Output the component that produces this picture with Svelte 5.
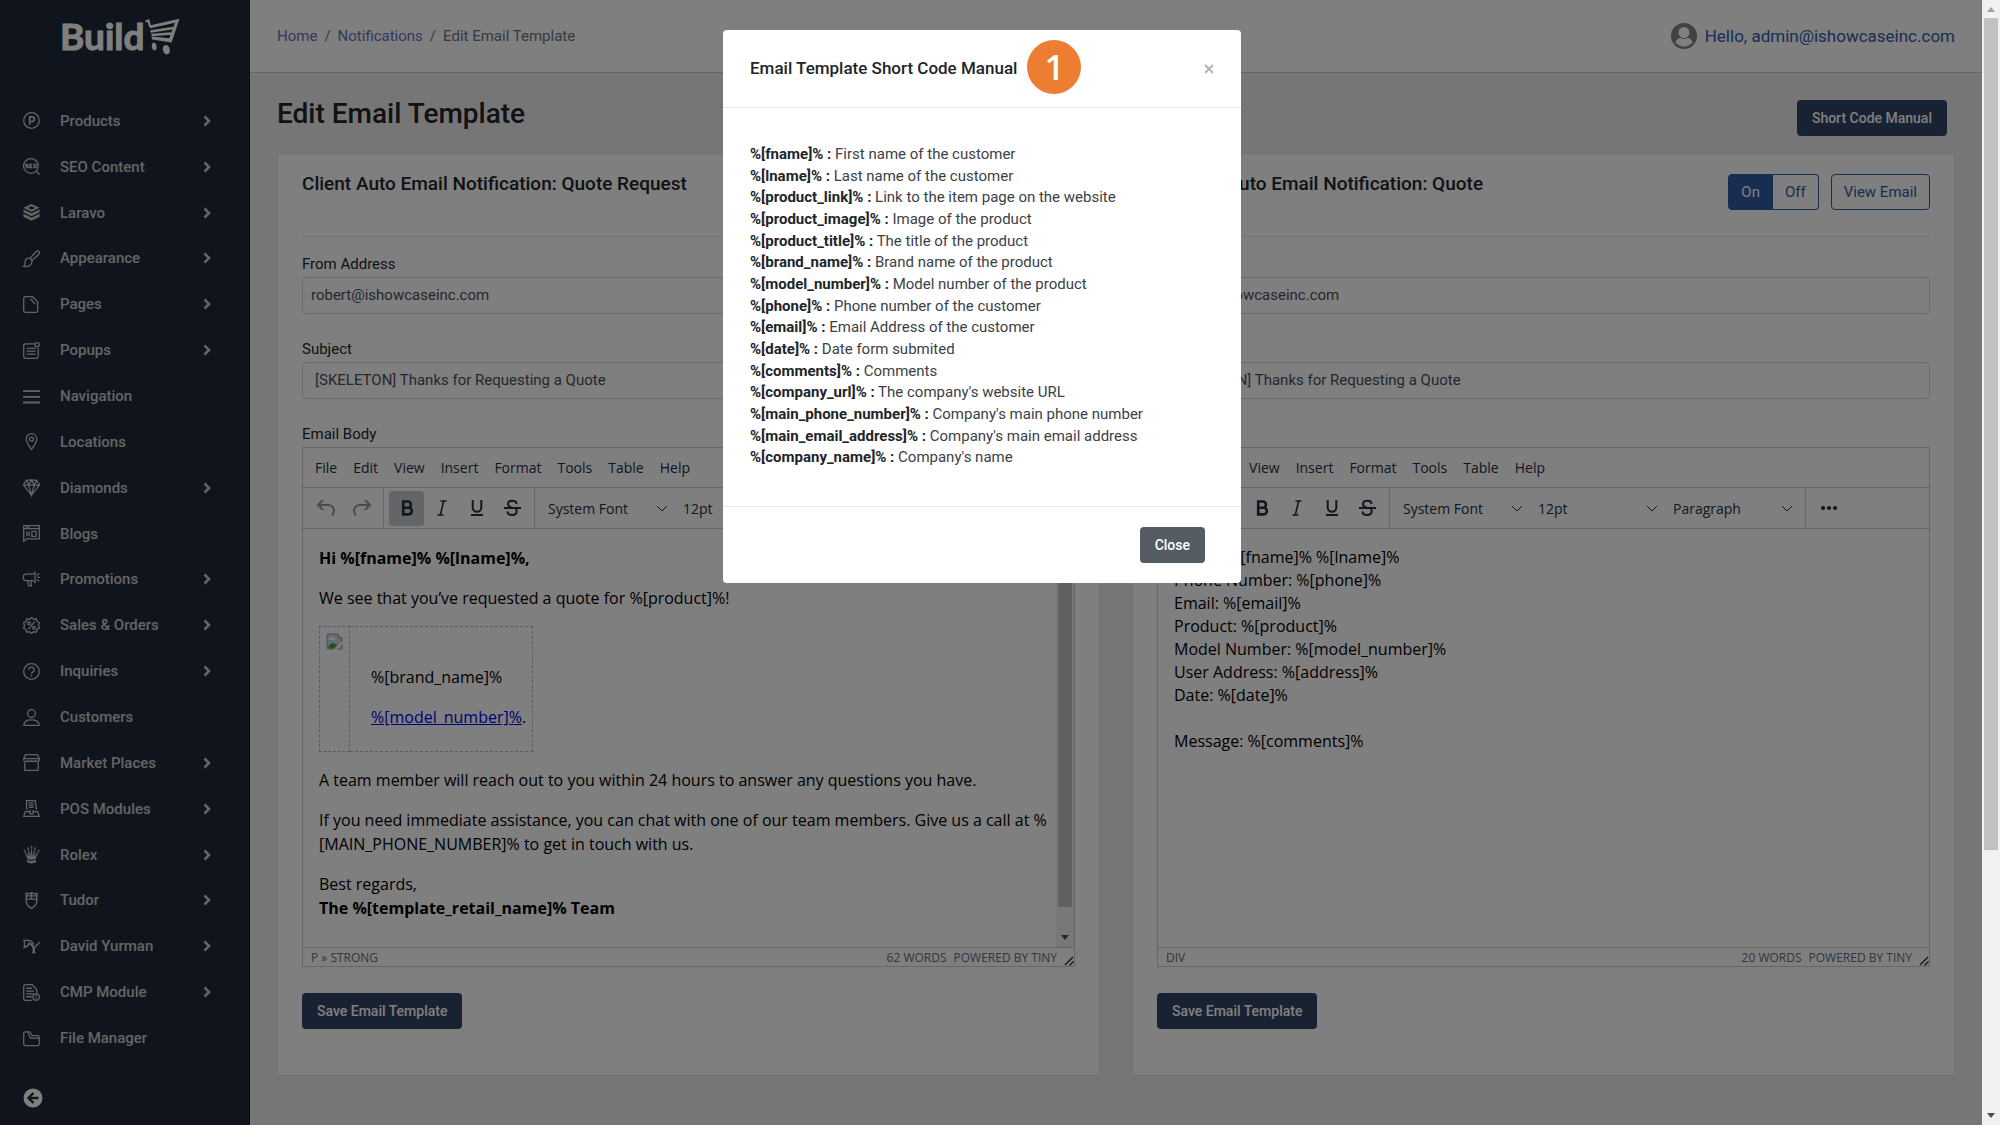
<script>
  /** Edit Email Template: two notification editors with the short code manual open. */

  const menu = [
    { label: 'Products', sub: true, icon: '<circle cx="12" cy="12" r="11"/><path d="M9.5 18V6.8h3.2a3.2 3.2 0 0 1 0 6.6H9.5" stroke-width="2.4"/>' },
    { label: 'SEO Content', sub: true, icon: '<circle cx="11.2" cy="11.2" r="10.4"/><path d="M18.6 18.6 23.4 23.4M7.4 9H4.2v2.3h3v2.4H4M13 9H9.6v4.7H13M9.6 11.3h2.8M15.4 9h3v4.7h-3z"/>' },
    { label: 'Laravo', sub: true, icon: '<path fill="currentColor" stroke="none" d="M12 0 23.4 5.4 12 11 .6 5.4zM12 3.2 7 5.5l5 2.4 5-2.4z" fill-rule="evenodd"/><path fill="currentColor" stroke="none" d="m.6 7.6 11.4 5.6 11.4-5.6v4.2L12 17.4.6 11.8zM.6 13.8 12 19.4l11.4-5.6V18L12 23.8.6 18z"/>' },
    { label: 'Appearance', sub: true, icon: '<path d="M10 11.5 18.6 2.2a2.6 2.6 0 0 1 3.8 3.7L13 14.6M7.6 11.6c3.2-.4 5.6 2.4 5 5.4-.8 4.4-5.4 6.8-11.8 6.2 2.4-1.4 2-3.4 2.2-6 .2-2.8 2-5.3 4.6-5.6zM9.8 11.6l3 3"/>' },
    { label: 'Pages', sub: true, icon: '<path d="M3.5 1h10l7.3 7.6v12.2a2.4 2.4 0 0 1-2.4 2.4H3.5A2.5 2.5 0 0 1 1 20.7V3.5A2.5 2.5 0 0 1 3.5 1zM10.5 4l6.5 7.5"/>' },
    { label: 'Popups', sub: true, icon: '<path d="M17 2.5H3.5A2.5 2.5 0 0 0 1 5v15.5A2.5 2.5 0 0 0 3.5 23H19a2.5 2.5 0 0 0 2.5-2.5V8M5 9h13M5 13h13M5 17h13"/><circle cx="20" cy="3.8" r="3"/>' },
    { label: 'Navigation', icon: '<path d="M0 4.5h24M0 12.5h24M0 20.5h24" stroke-width="2.6"/>' },
    { label: 'Locations', icon: '<path d="M12 1c4.5 0 7.5 3.4 7.5 7.5C19.5 13 15 19 12 23.2 9 19 4.5 13 4.5 8.5 4.5 4.4 7.5 1 12 1z"/><circle cx="12" cy="8.6" r="2.8"/>' },
    { label: 'Diamonds', sub: true, icon: '<path d="M5 1.5h14l4.3 7L12 23 .7 8.5zM.7 8.5h22.6M8 8.5 12 23l4-14.5M5 1.5l3 7 4-7 4 7 3-7"/>' },
    { label: 'Blogs', icon: '<path d="M1 1h22v18.5H5L1 23zM1 5h22M5.5 9v7M8.5 9v7"/><path d="M12.5 9h6v7h-6zM4 3h5"/>' },
    { label: 'Promotions', sub: true, icon: '<path d="M4 4.5h9.5L17 2v14l-3.5-2.5H4A3.5 3.5 0 0 1 .5 10V8A3.5 3.5 0 0 1 4 4.5zM6.5 13.5 8 21h4l-1-7.5M19.5 6 23 3.5M20 9h4M19.5 12l3.5 2.5"/>' },
    { label: 'Sales & Orders', sub: true, icon: '<path d="m12 .8 3 2.4 3.8-.6 1 3.7 3.4 1.8L21.800 12l1.400 3.600-3.400 2-1 3.800-3.800-.6-3 2.400-3-2.400-3.800.6-1-3.800-3.400-2L2.200 12 .8 8.100l3.400-1.800 1-3.700L9 3.200zM16.500 6.500l-9 11"/><circle cx="8.500" cy="8.800" r="2"/><circle cx="15.500" cy="15.200" r="2"/>' },
    { label: 'Inquiries', sub: true, icon: '<circle cx="12" cy="12" r="11"/><path d="M8.3 9.5a3.7 3.7 0 1 1 5.6 3.2c-1.3.8-1.9 1.3-1.9 2.8M12 17v2.2" stroke-width="2"/>' },
    { label: 'Customers', icon: '<circle cx="12" cy="6.5" r="5.5"/><path d="M1.2 23c.2-4.6 3.8-7.5 10.8-7.5S22.6 18.4 22.8 23z"/>' },
    { label: 'Market Places', sub: true, icon: '<path d="M3.5 1h17L23 6.5v2a2.8 2.8 0 0 1-5.5 0 2.8 2.8 0 0 1-5.5 0 2.8 2.8 0 0 1-5.5 0 2.8 2.8 0 0 1-5.5 0v-2zM1 6.5h22M2.5 12v11h19V12"/>' },
    { label: 'POS Modules', sub: true, icon: '<path d="M6.5 13.5 5 12V1h12.5L19 13.5M8 4.5h7M8 7.5h7M8 10.5h7M3.5 16.5h5l1.5 3h4l1.5-3h5L23 23H1zM10 14v3M14 14v3"/>' },
    { label: 'Rolex', sub: true, icon: '<path fill="currentColor" d="M6.5 18 2 7l6.2 9L7 4l3.6 12L12 2l1.4 14L17 4l-1.2 12L22 7l-4.5 11c-3 1.5-8 1.5-11 0z" stroke-width=".6"/><path d="M6.5 20.5c3 1.8 8 1.8 11 0v1.8c-3 1.5-8 1.5-11 0z"/><path d="M2 6.5h.1M7 3h.1M12 1.2h.1M17 3h.1M22 6.5h.1" stroke-linecap="round" stroke-width="2.4"/>' },
    { label: 'Tudor', sub: true, icon: '<path d="M4.5 2c2 1.5 4 .5 7.5-1 3.5 1.5 5.5 2.5 7.5 1v11c0 5-4 8-7.5 10-3.5-2-7.5-5-7.5-10zM4.5 10h15M12 1v9M4.5 5.5h15" stroke-width="2"/>' },
    { label: 'David Yurman', sub: true, icon: '<path d="M0 3.5h7c5 0 7 2.5 8 6M2 4v9M0 13.5c4 0 6-1.5 9-5M16 20v-6.5L23.5 6M13 20.5h4.5"/><path d="M7.5 7.5c3.5 0 6 3 7.5 6.500v6" stroke-width="2.8"/>' },
    { label: 'CMP Module', sub: true, icon: '<path d="M13 23H3.5A2.5 2.5 0 0 1 1 20.5v-17A2.5 2.5 0 0 1 3.5 1H13l6.5 7v5M4.5 6h8M4.5 10h11M4.5 14h11M4.5 18h8"/><circle cx="18.5" cy="18.5" r="4.5"/><path d="M18.5 14v9" stroke-width="1.2"/>' },
    { label: 'File Manager', icon: '<path d="M3.5 2.5h6L13 8h7.5a2.5 2.5 0 0 1 2.5 2.5v9a2.5 2.5 0 0 1-2.5 2.5h-17A2.5 2.5 0 0 1 1 19.5V5a2.5 2.5 0 0 1 2.5-2.5zM7 3l3.5 8.5H23"/>' },
  ]

  const codes = [
    ['fname', 'First name of the customer'],
    ['lname', 'Last name of the customer'],
    ['product_link', 'Link to the item page on the website'],
    ['product_image', 'Image of the product'],
    ['product_title', 'The title of the product'],
    ['brand_name', 'Brand name of the product'],
    ['model_number', 'Model number of the product'],
    ['phone', 'Phone number of the customer'],
    ['email', 'Email Address of the customer'],
    ['date', 'Date form submited'],
    ['comments', 'Comments'],
    ['company_url', "The company's website URL"],
    ['main_phone_number', "Company's main phone number"],
    ['main_email_address', "Company's main email address"],
    ['company_name', "Company's name"],
  ]

  const editorMenus = ['File', 'Edit', 'View', 'Insert', 'Format', 'Tools', 'Table', 'Help']
  const dropdowns = [
    ['Font', 'System Font'],
    ['Font size', '12pt'],
    ['Block', 'Paragraph'],
  ]

  let manualOpen = $state(true)
  let clientFrom = $state('robert@ishowcaseinc.com')
  let internalTo = $state('sales@ishowcaseinc.com')
  let clientSubject = $state('[SKELETON] Thanks for Requesting a Quote')
  let internalSubject = $state('[SKELETON] Thanks for Requesting a Quote')
</script>

{#snippet clientBody()}
  <p><strong>Hi %[fname]% %[lname]%,</strong></p>
  <p>We see that you’ve requested a quote for %[product]%!</p>
  <table class="product">
    <tbody>
      <tr>
        <td class="product__image">
          <svg width="17" height="17" viewBox="0 0 17 17" role="img" aria-label="Product">
            <path d="M1 1h11l4 4v11H1z" fill="#c6d9f5" stroke="#a0a0a0" />
            <path d="M3 6c0-2 3-3 4-1 2-1 3 1 2 2H3z" fill="#fff" />
            <path d="M2 15.500c1-5 5-7 9-3.500l-3 3.500z" fill="#4aa532" />
            <path d="M12 1v4h4" fill="#eee" stroke="#a0a0a0" />
            <path d="M17 9 9 17" stroke="#fff" stroke-width="2" />
          </svg>
        </td>
        <td class="product__text">
          <p>%[brand_name]%</p>
          <p><a href="#model">%[model_number]%</a>.</p>
        </td>
      </tr>
    </tbody>
  </table>
  <p>A team member will reach out to you within 24 hours to answer any questions you have.</p>
  <p>If you need immediate assistance, you can chat with one of our team members. Give us a call at %<wbr />[MAIN_PHONE_NUMBER]% to get in touch with us.</p>
  <p>Best regards,<br /><strong>The %[template_retail_name]% Team</strong></p>
{/snippet}

{#snippet internalBody()}
  <div>Name: %[fname]% %[lname]%</div>
  <div>Phone Number: %[phone]%</div>
  <div>Email: %[email]%</div>
  <div>Product: %[product]%</div>
  <div>Model Number: %[model_number]%</div>
  <div>User Address: %[address]%</div>
  <div>Date: %[date]%</div>
  <div><br /></div>
  <div>Message: %[comments]%</div>
{/snippet}

{#snippet editor(id, body, path, words, boldOn, scroll)}
  <div class="editor">
    <div class="editor__menubar">
      {#each editorMenus as item}
        <button type="button">{item}</button>
      {/each}
    </div>
    <div class="editor__toolbar">
      <div class="group group--muted">
        <button type="button" aria-label="Undo">
          <svg width="24" height="24" viewBox="0 0 24 24"><path d="m9 4-5 5 5 5M4.5 9H14c4 0 6 3 6 5.5 0 2-.8 3.5-2 5" /></svg>
        </button>
        <button type="button" aria-label="Redo">
          <svg width="24" height="24" viewBox="0 0 24 24"><path d="m16 4 5 5-5 5M20.5 9H11c-4 0-6 3-6 5.5 0 2 .8 3.5 2 5" /></svg>
        </button>
      </div>
      <div class="group">
        <button type="button" class:on={boldOn} aria-label="Bold">
          <svg width="24" height="24" viewBox="0 0 24 24"><path d="M8.2 5.5h4.6a3.1 3.1 0 0 1 0 6.3H8.2zM8.2 11.8h5.4a3.3 3.3 0 0 1 0 6.6H8.2z" stroke-width="2.6" /></svg>
        </button>
        <button type="button" aria-label="Italic">
          <svg width="24" height="24" viewBox="0 0 24 24"><path d="M10.5 5h6M7.5 19h6M13.7 5l-3.4 14" stroke-width="1.6" /></svg>
        </button>
        <button type="button" aria-label="Underline">
          <svg width="24" height="24" viewBox="0 0 24 24"><path d="M7.7 4v7.5a4.3 4.3 0 0 0 8.6 0V4M6 19h12" stroke-width="2" /></svg>
        </button>
        <button type="button" aria-label="Strikethrough">
          <svg width="24" height="24" viewBox="0 0 24 24"><path d="M16.5 8c0-2-1.8-3.2-4.3-3.2S8 6 8 8.2c0 1.8 1.5 2.8 4 3.4M7.5 15.5c0 2.2 1.9 3.5 4.7 3.5s4.5-1.4 4.5-3.7c0-.9-.3-1.8-1-2.5M4 12h17" stroke-width="2" /></svg>
        </button>
      </div>
      <div class="group">
        {#each dropdowns as [name, value]}
          <label class="pick">
            <select aria-label={name}><option>{value}</option></select>
            <svg width="10" height="10" viewBox="0 0 10 10"><path d="m0 3 5 5 5-5" /></svg>
          </label>
        {/each}
      </div>
      <div class="group">
        <button type="button" aria-label="More">
          <svg width="24" height="24" viewBox="0 0 24 24"><path class="dots" d="M6 12h.1M12 12h.1M18 12h.1" /></svg>
        </button>
      </div>
    </div>
    <div class="editor__main">
      <div class="editor__body" role="textbox" tabindex="0" aria-multiline="true" aria-labelledby={id}>
        {@render body()}
      </div>
      {#if scroll}
        <div class="bar bar--inner">
          <svg width="8" height="5" viewBox="0 0 8 5"><path d="M0 5 4 0l4 5z" /></svg>
          <span class="bar__thumb"></span>
          <svg width="8" height="5" viewBox="0 0 8 5"><path d="m0 0 4 5 4-5z" /></svg>
        </div>
      {/if}
    </div>
    <div class="editor__status">
      <span>{path}</span>
      <span class="editor__words">{words} WORDS</span>
      <a href="#tiny">POWERED BY TINY</a>
      <svg width="10" height="10" viewBox="0 0 10 10"><path d="M1 9 9 1M5.5 9.5l4-4" /></svg>
    </div>
  </div>
{/snippet}

<div class="shell">
  <aside class="sidebar">
    <a class="logo" href="#home" aria-label="Build home">
      <span>Build</span>
      <svg width="35" height="37" viewBox="0 0 35 37">
        <path d="M.5 3.5 3.5 2.5 5 8.5" fill="none" stroke="currentColor" stroke-width="2.2" />
        <path d="M4.5 7.5 34.5.8l-8 23.7L7 21.5l-.5-3 17.8 1.8L30 4.800 5 10.200z" fill="currentColor" />
        <path d="M5.5 13.5 28.5 10M6.5 17l20-1.5" fill="none" stroke="currentColor" stroke-width="2.4" />
        <ellipse cx="9.2" cy="28.5" rx="2.3" ry="3.8" fill="currentColor" transform="rotate(-10 9.2 28.5)" />
        <ellipse cx="21.3" cy="31.7" rx="3.3" ry="4.6" fill="currentColor" transform="rotate(-15 21.3 31.7)" />
      </svg>
    </a>
    <nav>
      {#each menu as item}
        <a href="#{item.label}">
          <svg class="nav-icon" width="17" height="17" viewBox="0 0 24 24">{@html item.icon}</svg>
          <span>{item.label}</span>
          {#if item.sub}
            <svg class="caret" width="8" height="12" viewBox="0 0 8 12"><path d="M1.5 1.5 6 6l-4.5 4.5" /></svg>
          {/if}
        </a>
      {/each}
    </nav>
    <button class="collapse" type="button" aria-label="Collapse menu">
      <svg width="20" height="20" viewBox="0 0 20 20">
        <circle cx="10" cy="10" r="9.5" fill="currentColor" />
        <path d="m10.5 5-5 5 5 5M6 10h9.5" fill="none" stroke="#212b3a" stroke-width="2.4" />
      </svg>
    </button>
  </aside>

  <div class="page">
    <header class="topbar">
      <nav class="crumbs" aria-label="Breadcrumb">
        <a href="#home">Home</a><i>/</i><a href="#notifications">Notifications</a><i>/</i><span>Edit Email Template</span>
      </nav>
      <a class="user" href="#account">
        <svg width="26" height="26" viewBox="0 0 26 26">
          <circle cx="13" cy="13" r="12" fill="#828282" stroke="#828282" stroke-width="2" />
          <circle cx="13" cy="9.5" r="5.5" fill="#fff" />
          <path d="M4.5 19.5c1-4 4-4.500 5.500-4.500 2 1.300 4 1.300 6 0 1.500 0 4.500.5 5.500 4.500-4.500 5.500-12.500 5.500-17 0z" fill="#fff" />
        </svg>
        Hello, admin@ishowcaseinc.com
      </a>
    </header>

    <main>
      <div class="heading">
        <h1>Edit Email Template</h1>
        <button class="btn btn--navy" type="button" onclick={() => (manualOpen = true)}>Short Code Manual</button>
      </div>

      <div class="cards">
        <section class="card">
          <div class="card__head">
            <h2>Client Auto Email Notification: Quote Request</h2>
          </div>
          <label for="from-client">From Address</label>
          <input id="from-client" type="text" bind:value={clientFrom} />
          <label for="subject-client">Subject</label>
          <input id="subject-client" class="subject" type="text" bind:value={clientSubject} />
          <span class="label" id="body-client">Email Body</span>
          {@render editor('body-client', clientBody, 'P » STRONG', 62, true, true)}
          <button class="btn btn--navy" type="button">Save Email Template</button>
        </section>

        <section class="card">
          <div class="card__head">
            <h2>Internal Auto Email Notification: Quote</h2>
            <div class="toggle">
              <button class="btn btn--blue" type="button">On</button>
              <button class="btn btn--line" type="button">Off</button>
            </div>
            <button class="btn btn--line" type="button">View Email</button>
          </div>
          <label for="to-internal">To Address</label>
          <input id="to-internal" type="text" bind:value={internalTo} />
          <label for="subject-internal">Subject</label>
          <input id="subject-internal" class="subject" type="text" bind:value={internalSubject} />
          <span class="label" id="body-internal">Email Body</span>
          {@render editor('body-internal', internalBody, 'DIV', 20, false, false)}
          <button class="btn btn--navy" type="button">Save Email Template</button>
        </section>
      </div>
    </main>
  </div>

  <div class="bar">
    <svg width="8" height="5" viewBox="0 0 8 5"><path d="M0 5 4 0l4 5z" fill="#a3a3a3" /></svg>
    <span class="bar__thumb"></span>
    <svg width="8" height="5" viewBox="0 0 8 5"><path d="m0 0 4 5 4-5z" /></svg>
  </div>
</div>

{#if manualOpen}
  <div class="backdrop">
    <div class="modal" role="dialog" aria-modal="true" aria-labelledby="manual-title">
      <div class="modal__head">
        <h3 id="manual-title">Email Template Short Code Manual</h3>
        <span class="step">1</span>
        <button class="modal__x" type="button" aria-label="Dismiss" onclick={() => (manualOpen = false)}>
          <svg width="10" height="10" viewBox="0 0 10 10"><path d="m1 1 8 8M9 1 1 9" /></svg>
        </button>
      </div>
      <ul class="modal__body">
        {#each codes as [code, text]}
          <li><b>%[{code}]% :</b> {text}</li>
        {/each}
      </ul>
      <div class="modal__foot">
        <button class="btn btn--gray" type="button" onclick={() => (manualOpen = false)}>Close</button>
      </div>
    </div>
  </div>
{/if}

<style>
  :global(body) {
    overflow: hidden;
    font-family: Roboto, "Liberation Sans", sans-serif;
    font-size: 14px;
    color: #212529;
  }

  .shell,
  .shell *,
  .backdrop,
  .backdrop * {
    box-sizing: border-box;
  }

  a {
    color: inherit;
    text-decoration: none;
  }

  button,
  input,
  select {
    font: inherit;
    color: inherit;
  }

  button {
    border: 0;
    padding: 0;
    background: none;
  }

  svg {
    display: block;
    flex: none;
  }

  .shell {
    display: grid;
    grid-template-columns: 250px minmax(0, 1fr) 18px;
    height: 100vh;
  }

  /* Sidebar */
  .sidebar {
    display: flex;
    flex-direction: column;
    background: #212b3a;
    color: #c9c9c9;
    border-right: 1px solid #161d29;
  }

  .logo {
    display: flex;
    align-items: flex-start;
    height: 98px;
    padding: 12px 0 0 60px;
    color: #fff;
  }

  .logo span {
    font: 700 37px/48px Lato, sans-serif;
    -webkit-text-stroke: 1px currentColor;
  }

  .logo svg {
    margin-top: 6px;
  }

  .sidebar nav {
    flex: 1;
    display: grid;
    grid-auto-rows: 1fr;
  }

  .sidebar nav a {
    display: flex;
    align-items: center;
    gap: 20px;
    padding: 0 38px 0 23px;
    font-size: 15px;
    font-weight: 500;
  }

  .nav-icon {
    overflow: visible;
    fill: none;
    stroke: currentColor;
    stroke-width: 1.8;
  }

  .caret {
    margin-left: auto;
    fill: none;
    stroke: currentColor;
    stroke-width: 2.6;
  }

  .collapse {
    height: 64px;
    padding: 10px 0 0 23px;
    color: #fff;
  }

  /* Page */
  .page {
    display: flex;
    flex-direction: column;
    min-width: 0;
    background: #ececec;
  }

  .topbar {
    display: flex;
    align-items: center;
    justify-content: space-between;
    height: 73px;
    padding: 0 27px;
    background: #fff;
    border-bottom: 1px solid #c4c6ca;
  }

  .crumbs {
    display: flex;
    gap: 7px;
    font-size: 15px;
    color: #6c757d;
  }

  .crumbs a {
    color: #6a70bd;
  }

  .crumbs i {
    font-style: normal;
  }

  .user {
    display: flex;
    align-items: center;
    gap: 8px;
    font-size: 17px;
    color: #305aa4;
  }

  main {
    padding: 0 27px;
  }

  .heading {
    display: flex;
    align-items: center;
    justify-content: space-between;
    height: 80px;
    padding: 10px 8px 0 0;
  }

  h1,
  h2,
  h3 {
    margin: 0;
    font-weight: 500;
  }

  h1 {
    padding-bottom: 10px;
    font-size: 28px;
  }

  .btn {
    height: 36px;
    padding: 0 12px;
    border: 1px solid transparent;
    border-radius: 4px;
    font-size: 15px;
    font-weight: 400;
  }

  .btn--navy {
    background: #324567;
    color: #fff;
  }

  .btn--blue {
    background: #305aa4;
    border-color: #305aa4;
    color: #fff;
  }

  .btn--line {
    border-color: #305aa4;
    color: #305aa4;
  }

  .btn--gray {
    background: #545b62;
    color: #fff;
  }

  .btn--navy,
  .btn--gray {
    padding: 0 14px;
    font-size: 14px;
    font-weight: 500;
  }

  .cards {
    display: grid;
    grid-template-columns: 1fr 1fr;
    gap: 32px;
  }

  .card {
    padding: 0 24px 46px;
    min-width: 0;
    background: #fff;
    border: 1px solid #e4e4e4;
    border-radius: 4px;
  }

  .card__head {
    display: flex;
    align-items: flex-start;
    height: 83px;
    margin-bottom: 17px;
    padding-top: 20px;
    border-bottom: 1px solid #e2e4e6;
  }

  h2 {
    flex: 1;
    font-size: 19px;
    line-height: 20px;
  }

  .toggle {
    display: flex;
    margin-right: 12px;
  }

  .toggle .btn:first-child {
    border-radius: 4px 0 0 4px;
  }

  .toggle .btn:last-child {
    border-radius: 0 4px 4px 0;
    border-left: 0;
  }

  label:not(.pick),
  .label {
    display: block;
    height: 23px;
    font-size: 15px;
    line-height: 20px;
  }

  input {
    display: block;
    width: 100%;
    height: 37px;
    margin-bottom: 25px;
    padding: 0 8px 2px;
    border: 1px solid #d5d7e2;
    border-radius: 4px;
    background: none;
    font-size: 15px;
    color: #495057;
  }

  .subject {
    padding: 0 12px 2px;
  }

  /* Editor */
  .editor {
    margin-bottom: 26px;
    border: 1px solid #ccc;
    font-family: "Open Sans", "Noto Sans", sans-serif;
    color: #222f3e;
  }

  .editor__menubar {
    display: flex;
    height: 40px;
    padding: 0 4px;
    border-bottom: 1px solid #ccc;
  }

  .editor__menubar button {
    padding: 0 8px;
    font-size: 14px;
  }

  .editor__toolbar {
    display: flex;
    height: 41px;
    border-bottom: 1px solid #ccc;
  }

  .group {
    display: flex;
    align-items: center;
    padding: 0 5px;
    border-right: 1px solid #ccc;
  }

  .group:last-child {
    border-right: 0;
  }

  .group button {
    display: grid;
    place-items: center;
    width: 35px;
    height: 35px;
    border-radius: 3px;
  }

  .group button.on {
    background: #c8cbcf;
  }

  .group svg {
    fill: none;
    stroke: #222f3e;
    stroke-width: 2;
  }

  .group--muted svg {
    opacity: 0.5;
  }

  .group .dots {
    stroke-width: 4;
    stroke-linecap: round;
  }

  .pick {
    display: flex;
    align-items: center;
    width: 135px;
    padding: 0 8px;
  }

  .pick select {
    flex: 1;
    min-width: 0;
    padding: 0;
    border: 0;
    appearance: none;
    background: none;
    font-size: 14px;
  }

  .pick svg {
    stroke-width: 1;
  }

  .editor__main {
    display: flex;
    height: 418px;
  }

  .editor__body {
    flex: 1;
    padding: 17px 8px 0 16px;
    font-size: 16px;
    line-height: 23px;
    color: #000;
  }

  .editor__body p {
    margin: 0 0 16px;
    line-height: 24px;
  }

  .editor__body a {
    color: #00e;
    text-decoration: underline;
  }

  .product {
    margin-bottom: 16px;
    border-collapse: collapse;
  }

  .product td {
    padding: 6px;
    border: 1px dashed #bbb;
    vertical-align: top;
  }

  .product .product__text {
    padding: 38px 6px 6px 21px;
  }

  .editor__status {
    display: flex;
    align-items: center;
    height: 19px;
    padding: 0 0 0 8px;
    border-top: 1px solid #ccc;
    font-size: 12px;
    color: #646d78;
  }

  .editor__words {
    margin: 0 7px 0 auto;
  }

  .editor__status svg {
    align-self: flex-end;
    margin-left: 7px;
    fill: none;
    stroke: #222f3e;
    stroke-width: 1.4;
  }

  /* Scrollbars */
  .bar {
    display: flex;
    flex-direction: column;
    align-items: center;
    justify-content: space-between;
    gap: 6px;
    padding: 7px 0;
    background: #f1f1f1;
  }

  .bar .bar__thumb {
    width: 14px;
    height: 832px;
    margin-bottom: auto;
    background: #c1c1c1;
  }

  .bar--inner {
    width: 18px;
  }

  .bar--inner .bar__thumb {
    height: 360px;
  }

  .bar svg {
    fill: #505050;
  }

  /* Short code manual */
  .backdrop {
    position: fixed;
    inset: 0 18px 0 0;
    display: flex;
    align-items: flex-start;
    justify-content: center;
    padding: 30px 18px 0 0;
    background: rgba(0, 0, 0, 0.5);
  }

  .modal {
    width: 518px;
    background: #fff;
    border-radius: 4px;
  }

  .modal__head {
    display: flex;
    align-items: center;
    height: 78px;
    padding: 0 27px;
    border-bottom: 1px solid #e4e6e8;
  }

  h3 {
    padding-bottom: 2px;
    font-size: 17px;
  }

  .step {
    display: grid;
    place-items: center;
    width: 54px;
    height: 54px;
    margin: 0 auto 4px 10px;
    border-radius: 50%;
    background: #ed7d31;
    color: #fff;
    font: 600 35px/54px "Open Sans", sans-serif;
  }

  .modal__x svg {
    fill: none;
    stroke: #b4b4b4;
    stroke-width: 2;
  }

  .modal__body {
    display: grid;
    min-height: 398px;
    margin: 0;
    padding: 36px 27px 37px;
    list-style: none;
    line-height: 21px;
    font-size: 15px;
  }

  .modal__body li {
    color: #3c4146;
  }

  .modal__body b {
    font-weight: 700;
    color: #212529;
  }

  .modal__foot {
    display: flex;
    justify-content: flex-end;
    padding: 20px 36px;
    border-top: 1px solid #e4e8ec;
  }
</style>
